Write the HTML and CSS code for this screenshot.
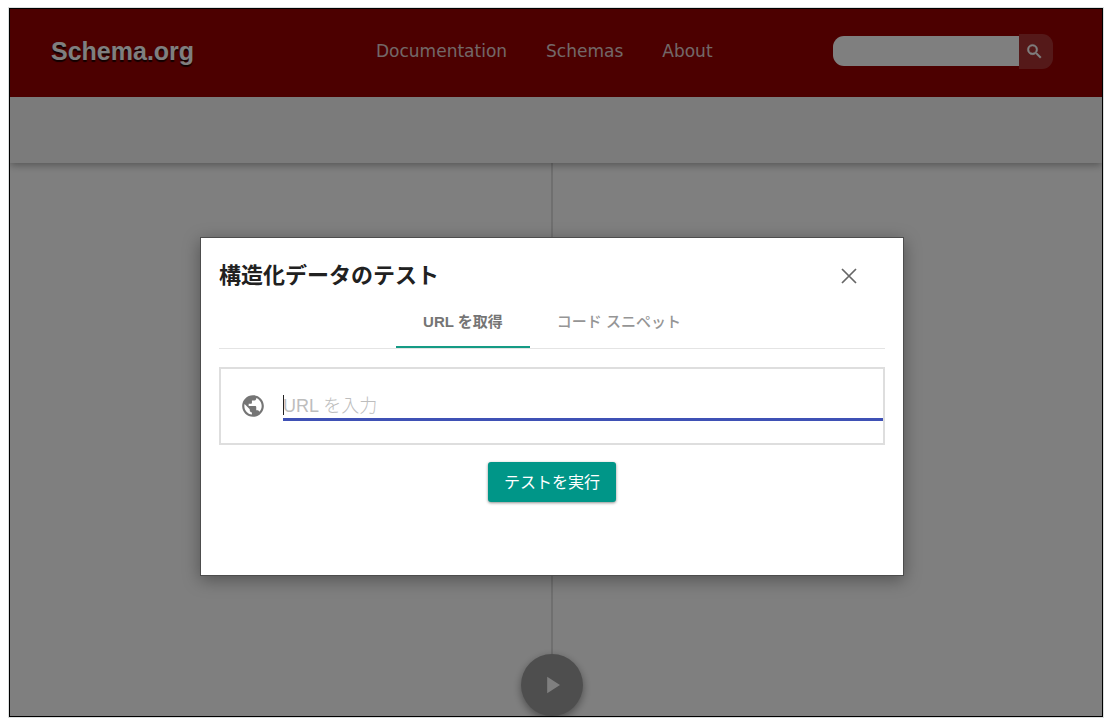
FILE: index.html
```
<!DOCTYPE html>
<html lang="ja">
<head>
<meta charset="utf-8">
<meta name="viewport" content="width=device-width, initial-scale=1">
<title>Schema.org</title>
<link rel="stylesheet" href="styles.css">
</head>
<body>
<div class="frame">
  <header class="header">
    <a class="logo" href="#">Schema.org</a>
    <nav class="nav">
      <a href="#">Documentation</a>
      <a href="#">Schemas</a>
      <a href="#">About</a>
    </nav>
    <form class="search">
      <input class="search-box" type="text" aria-label="Search">
      <button class="search-button" type="button" aria-label="Search">
        <svg viewBox="0 0 24 24" width="19" height="19" fill="currentColor" stroke="currentColor" stroke-width="0.6"><path d="M15.500 14h-.79l-.28-.27A6.470 6.470 0 0 0 16 9.500 6.500 6.500 0 1 0 9.500 16c1.610 0 3.090-.59 4.230-1.570l.27.28v.79l5 4.990L20.490 19l-4.990-5zm-6 0a4.500 4.500 0 1 1 0-9 4.500 4.500 0 0 1 0 9z"/></svg>
      </button>
    </form>
  </header>
  <div class="toolbar"></div>
  <main class="workspace">
    <div class="divider"></div>
    <button class="play" type="button" aria-label="Run">
      <svg viewBox="0 0 24 24" width="28" height="28" fill="currentColor"><path d="M7 5v14l11-7z"/></svg>
    </button>
  </main>

  <div class="overlay">
    <section class="dialog" role="dialog" aria-labelledby="dialog-title">
      <div class="dialog-head">
        <h1 class="dialog-title" id="dialog-title">構造化データのテスト</h1>
        <button class="close" type="button" aria-label="閉じる">
          <svg viewBox="0 0 16 16" width="16" height="16" fill="none" stroke="currentColor" stroke-width="1.700"><path d="M1 1l14 14M15 1L1 15"/></svg>
        </button>
      </div>
      <div class="tabs" role="tablist">
        <button class="tab tab-active" type="button" role="tab" aria-selected="true">URL を取得</button>
        <button class="tab" type="button" role="tab" aria-selected="false">コード スニペット</button>
      </div>
      <div class="url-box">
        <svg class="globe" viewBox="0 0 24 24" width="26" height="26" fill="currentColor"><path d="M12 2C6.480 2 2 6.480 2 12s4.480 10 10 10 10-4.480 10-10S17.520 2 12 2zm-1 17.930c-3.950-.49-7-3.850-7-7.930 0-.62.08-1.210.21-1.790L9 15v1c0 1.100.9 2 2 2v1.930zm6.900-2.540c-.26-.81-1-1.390-1.900-1.390h-1v-3c0-.55-.45-1-1-1H8v-2h2c.55 0 1-.45 1-1V7h2c1.100 0 2-.9 2-2v-.41c2.930 1.190 5 4.060 5 7.410 0 2.080-.8 3.970-2.100 5.390z"/></svg>
        <div class="field">
          <input class="url-input" type="url" placeholder="URL を入力" aria-label="URL を入力">
        </div>
      </div>
      <button class="run" type="button">テストを実行</button>
    </section>
  </div>
</div>
</body>
</html>
```
FILE: styles.css
```
* {
  box-sizing: border-box;
}

body {
  margin: 0;
  background: #fff;
  font-family: "Liberation Sans", "Noto Sans CJK JP", sans-serif;
}

button,
input {
  margin: 0;
  padding: 0;
  border: 0;
  font-family: inherit;
}

svg {
  display: block;
}

.frame {
  position: relative;
  display: flex;
  flex-direction: column;
  height: calc(100vh - 14px);
  margin: 8px 13px 6px 9px;
  border: 1px solid #000;
  box-shadow: 0 0 0 1px #dde0e0;
  overflow: hidden;
}

.header {
  display: grid;
  grid-template-columns: 325px 1fr auto;
  align-items: center;
  height: 88px;
  flex: none;
  padding: 0 49px 4px 41px;
  background: #990000;
}

.logo {
  color: #fff;
  font-size: 25px;
  font-weight: bold;
  text-decoration: none;
  text-shadow: 0 2px 1px #220000;
}

.nav {
  display: flex;
  gap: 39px;
}

.nav a {
  color: #e4d0d0;
  font-family: "DejaVu Sans", sans-serif;
  font-size: 17px;
  text-decoration: none;
}

.search {
  display: flex;
  align-items: center;
}

.search-box {
  width: 186px;
  height: 30px;
  padding: 0 10px;
  border-radius: 11px 0 0 11px;
  background: #fff;
}

.search-button {
  display: grid;
  place-items: center;
  width: 34px;
  height: 35px;
  padding-right: 3px;
  border-radius: 0 11px 11px 0;
  background: #aa3333;
  color: #fff;
}

.toolbar {
  position: relative;
  height: 66px;
  flex: none;
  background: #f7f7f7;
  box-shadow: 0 2px 8px rgba(0, 0, 0, 0.35);
  clip-path: inset(0 0 -12px);
}

.workspace {
  display: flex;
  flex: 1;
  flex-direction: column;
  align-items: center;
  padding-right: 8px;
  background: #fff;
}

.divider {
  flex: 1;
  width: 2px;
  background: #dedede;
}

.play {
  display: grid;
  place-items: center;
  width: 62px;
  height: 62px;
  padding-left: 2px;
  border-radius: 50%;
  background: #9c9c9c;
  color: #fff;
  box-shadow: 0 3px 8px rgba(0, 0, 0, 0.4);
}

.overlay {
  position: absolute;
  inset: 0;
  display: flex;
  align-items: flex-start;
  justify-content: center;
  padding: 228px 8px 0 0;
  background: rgba(0, 0, 0, 0.5);
}

.dialog {
  display: flex;
  flex-direction: column;
  width: 65%;
  max-width: 704px;
  padding: 18px 18px 73px;
  border: 1px solid #4d4d4d;
  background: #fff;
  box-shadow: 0 4px 16px rgba(0, 0, 0, 0.35);
}

.dialog-head {
  display: flex;
  align-items: center;
  justify-content: space-between;
  padding-right: 28px;
}

.dialog-title {
  margin: 0;
  color: #212121;
  font-size: 22px;
  line-height: 40px;
}

.close {
  width: 16px;
  height: 16px;
  background: none;
  color: #666;
}

.tabs {
  display: flex;
  justify-content: center;
  border-bottom: 1px solid #e4e4e4;
}

.tab {
  height: 52px;
  padding: 0 27px 2px;
  border-bottom: 2px solid transparent;
  background: none;
  color: #959595;
  font-size: 15px;
  font-weight: 500;
}

.tab-active {
  margin-bottom: -1px;
  border-color: #159b85;
  color: #757575;
  font-weight: bold;
}

.url-box {
  display: flex;
  align-items: center;
  gap: 17px;
  height: 78px;
  margin-top: 18px;
  padding-left: 19px;
  border: 2px solid #dedede;
}

.globe {
  flex: none;
  color: #757575;
}

.field {
  position: relative;
  flex: 1;
  border-bottom: 3px solid #3f51b5;
}

.field::before {
  content: "";
  position: absolute;
  top: 3px;
  left: 0;
  width: 1px;
  height: 20px;
  background: #222;
}

.url-input {
  display: block;
  width: 100%;
  height: 26px;
  padding-top: 4px;
  outline: none;
  background: none;
  font-size: 18px;
  font-weight: 300;
}

.url-input::placeholder {
  color: #bdbdbd;
}

.run {
  align-self: center;
  height: 40px;
  margin-top: 17px;
  padding: 0 16px 2px;
  border-radius: 3px;
  background: #009688;
  color: #fff;
  font-size: 16px;
  box-shadow: 0 1px 3px rgba(0, 0, 0, 0.45);
}
```
